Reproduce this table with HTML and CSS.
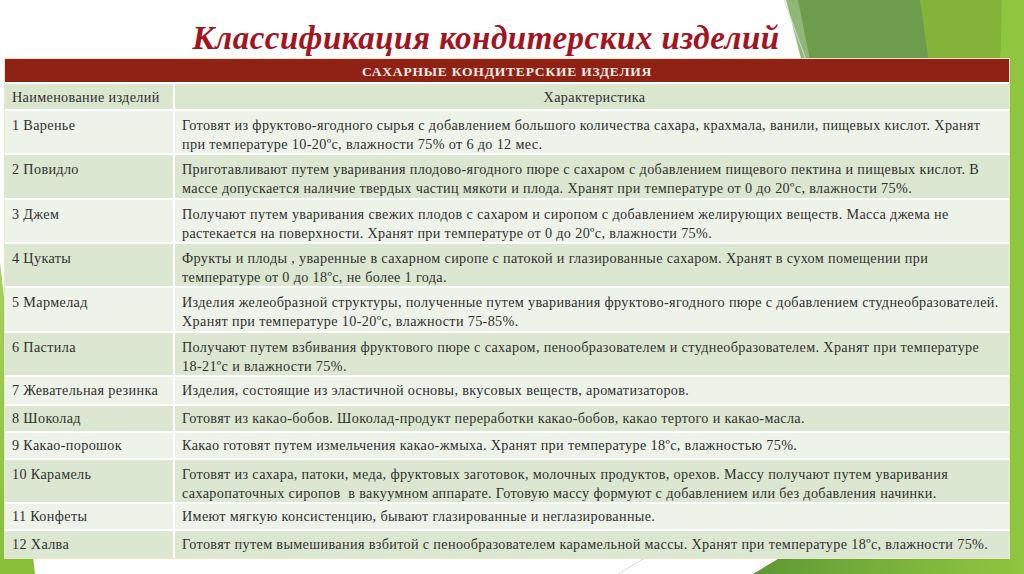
FILE: index.html
```html
<!DOCTYPE html>
<html lang="ru">
<head>
<meta charset="utf-8">
<title>Классификация кондитерских изделий</title>
<link rel="stylesheet" href="styles.css">
</head>
<body>
<div class="slide">
  <svg class="deco" width="1024" height="574" viewBox="0 0 1024 574" aria-hidden="true">
    <defs>
      <linearGradient id="gb" x1="0" y1="0" x2="1" y2="0">
        <stop offset="0" stop-color="#5d9834"/>
        <stop offset="0.45" stop-color="#76b03a"/>
        <stop offset="1" stop-color="#8fc63e"/>
      </linearGradient>
      <linearGradient id="gl" x1="0" y1="0" x2="0" y2="1">
        <stop offset="0" stop-color="#a6d35a"/>
        <stop offset="1" stop-color="#86bf38"/>
      </linearGradient>
    </defs>
    <polygon points="786,0 800,0 814,70 804,70" fill="#8fb776"/>
    <polygon points="798,0 922,0 932,70 812,70" fill="#6e9c4d"/>
    <polygon points="920,0 1004,0 1000,70 930,70" fill="#84b33a"/>
    <polygon points="1002,0 1024,0 1024,574 1006,574 1000,70" fill="#8fc63f"/>
    <line x1="784" y1="0" x2="806" y2="60" stroke="#d7e0d2" stroke-width="1"/>
    <polygon points="788,553 1024,553 1024,574 753,574" fill="url(#gb)"/>
    <polygon points="0,262 35,574 0,574" fill="url(#gl)"/>
    <line x1="618" y1="574" x2="662" y2="548" stroke="#dcdcdc" stroke-width="1"/>
  </svg>

  <h1 class="title">Классификация кондитерских изделий</h1>

  <div class="table">
    <div class="cap">САХАРНЫЕ КОНДИТЕРСКИЕ ИЗДЕЛИЯ</div>

    <div class="cell head h-name">Наименование изделий</div>
    <div class="cell head h-char">Характеристика</div>

    <div class="cell odd r2">1 Варенье</div>
    <div class="cell odd r2">Готовят из фруктово-ягодного сырья с добавлением большого количества сахара, крахмала, ванили, пищевых кислот. Хранят при температуре 10-20ºс, влажности 75% от 6 до 12 мес.</div>

    <div class="cell even r2b">2 Повидло</div>
    <div class="cell even r2b">Приготавливают путем уваривания плодово-ягодного пюре с сахаром с добавлением пищевого пектина и пищевых кислот. В массе допускается наличие твердых частиц мякоти и плода. Хранят при температуре от 0 до 20ºс, влажности 75%.</div>

    <div class="cell odd r2">3 Джем</div>
    <div class="cell odd r2">Получают путем уваривания свежих плодов с сахаром и сиропом с добавлением желирующих веществ. Масса джема не растекается на поверхности. Хранят при температуре от 0 до 20ºс, влажности 75%.</div>

    <div class="cell even r2">4 Цукаты</div>
    <div class="cell even r2">Фрукты и плоды , уваренные в сахарном сиропе с патокой и глазированные сахаром. Хранят в сухом помещении при температуре от 0 до 18ºс, не более 1 года.</div>

    <div class="cell odd r2b">5 Мармелад</div>
    <div class="cell odd r2b">Изделия желеобразной структуры, полученные путем уваривания фруктово-ягодного пюре с добавлением студнеобразователей. Хранят при температуре 10-20ºс, влажности 75-85%.</div>

    <div class="cell even r2">6 Пастила</div>
    <div class="cell even r2">Получают путем взбивания фруктового пюре с сахаром, пенообразователем и студнеобразователем. Хранят при температуре 18-&#8288;21ºс и влажности 75%.</div>

    <div class="cell odd r1b">7 Жевательная резинка</div>
    <div class="cell odd r1b">Изделия, состоящие из эластичной основы, вкусовых веществ, ароматизаторов.</div>

    <div class="cell even r1">8 Шоколад</div>
    <div class="cell even r1">Готовят из какао-бобов. Шоколад-продукт переработки какао-бобов, какао тертого и какао-масла.</div>

    <div class="cell odd r1">9 Какао-порошок</div>
    <div class="cell odd r1">Какао готовят путем измельчения какао-жмыха. Хранят при температуре 18ºс, влажностью 75%.</div>

    <div class="cell even r2">10 Карамель</div>
    <div class="cell even r2">Готовят из сахара, патоки, меда, фруктовых заготовок, молочных продуктов, орехов. Массу получают путем уваривания сахаропаточных сиропов&nbsp; в вакуумном аппарате. Готовую массу формуют с добавлением или без добавления начинки.</div>

    <div class="cell odd r1">11 Конфеты</div>
    <div class="cell odd r1">Имеют мягкую консистенцию, бывают глазированные и неглазированные.</div>

    <div class="cell even r1b">12 Халва</div>
    <div class="cell even r1b">Готовят путем вымешивания взбитой с пенообразователем карамельной массы. Хранят при температуре 18ºс, влажности 75%.</div>
  </div>
</div>
</body>
</html>
```

FILE: styles.css
```css
* { box-sizing: border-box; }

html, body {
  margin: 0;
  padding: 0;
  background: #ffffff;
}

.slide {
  position: relative;
  width: 1024px;
  height: 574px;
  overflow: hidden;
  background: #ffffff;
  font-family: "Liberation Serif", "Times New Roman", serif;
}

.deco {
  position: absolute;
  left: 0;
  top: 0;
  z-index: 0;
}

.title {
  position: relative;
  z-index: 1;
  margin: 0;
  height: 59px;
  padding: 18px 52px 0 0;
  text-align: center;
  font-family: "Liberation Serif", "Times New Roman", serif;
  font-style: italic;
  font-weight: bold;
  font-size: 33px;
  line-height: 40px;
  letter-spacing: 0.5px;
  color: #a3141f;
}

.table {
  position: relative;
  z-index: 1;
  margin-left: 5px;
  width: 1004px;
  display: grid;
  grid-template-columns: 168px 1fr;
  column-gap: 2px;
  row-gap: 2px;
  background: #ffffff;
  outline: 1px solid #ece6c6;
  box-shadow: 0 0 3px rgba(0, 0, 0, 0.12);
}

.cap {
  grid-column: 1 / 3;
  height: 23px;
  background: #8f2214;
  color: #f6ede6;
  text-align: center;
  font-family: "Liberation Serif", "Times New Roman", serif;
  font-weight: bold;
  font-size: 13.5px;
  letter-spacing: 0.8px;
  line-height: 25px;
}

.cell {
  font-family: "Liberation Serif", "Times New Roman", serif;
  font-size: 14.2px;
  letter-spacing: 0.35px;
  line-height: 18.5px;
  color: #2f2f2f;
  padding: 5px 2px 0 7px;
}

.head {
  height: 25px;
  background: #dbe6cf;
  padding-top: 4px;
}

.h-char { text-align: center; }

.odd { background: #edf3e8; }
.even { background: #dce7d1; }

.r2 { height: 42px; }
.r2b { height: 43px; }
.r1 { height: 25px; padding-top: 3px; }
.r1b { height: 27px; padding-top: 4px; }
```
